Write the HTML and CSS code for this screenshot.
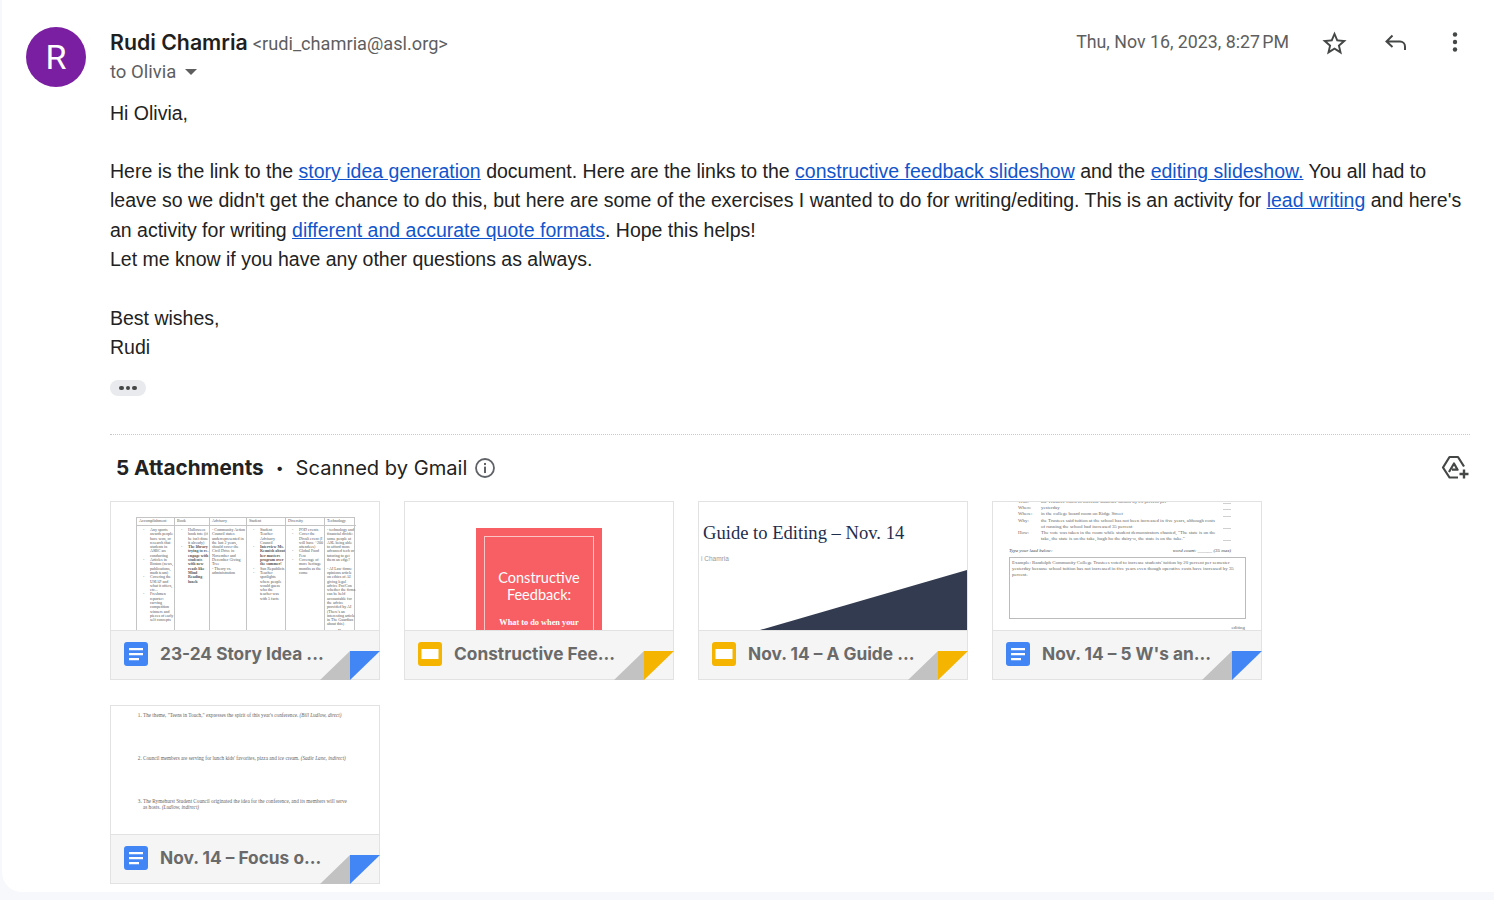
FILE: index.html
```html
<!DOCTYPE html>
<html lang="en">
<head>
<meta charset="utf-8">
<title>Email</title>
<link rel="stylesheet" href="styles.css">
</head>
<body>
<main class="panel">
  <div class="avatar">R</div>
  <div class="message">
    <header class="head">
      <div class="who">
        <div class="from"><span class="name">Rudi Chamria</span> <span class="addr">&lt;rudi_chamria@asl.org&gt;</span></div>
        <div class="to">to Olivia <span class="caret"></span></div>
      </div>
      <div class="meta">
        <span class="date">Thu, Nov 16, 2023, 8:27&#8239;PM</span>
        <svg class="icon-star" viewBox="0 0 24 24" width="29" height="29"><path fill="#444746" d="M22 9.24l-7.19-.62L12 2 9.19 8.63 2 9.24l5.46 4.73L5.82 21 12 17.27 18.18 21l-1.63-7.03L22 9.24zM12 15.4l-3.76 2.27 1-4.28-3.32-2.88 4.38-.38L12 6.1l1.71 4.04 4.38.38-3.32 2.88 1 4.28L12 15.4z"/></svg>
        <svg class="icon-reply" viewBox="0 0 24 24" width="24" height="24"><path fill="none" stroke="#444746" stroke-width="2" d="M9.5 5.5L3.5 11.5l6 5.5M3.5 11.5H17a5 5 0 0 1 5 5V20"/></svg>
        <svg class="icon-more" viewBox="0 0 24 24" width="24" height="24"><g fill="#444746"><circle cx="12" cy="4.5" r="2.2"/><circle cx="12" cy="12" r="2.2"/><circle cx="12" cy="19.5" r="2.2"/></g></svg>
      </div>
    </header>
    <div class="body">
      <p>Hi Olivia,</p>
      <p class="blank">&nbsp;</p>
      <p>Here is the link to the <a href="#">story idea generation</a> document. Here are the links to the <a href="#">constructive feedback slideshow</a> and the <a href="#">editing slideshow.</a> You all had to leave so we didn't get the chance to do this, but here are some of the exercises I wanted to do for writing/editing. This is an activity for <a href="#">lead writing</a> and here's an activity for writing <a href="#">different and accurate quote formats</a>. Hope this helps!</p>
      <p>Let me know if you have any other questions as always.</p>
      <p class="blank">&nbsp;</p>
      <p>Best wishes,</p>
      <p>Rudi</p>
    </div>
    <div class="more-pill"><i></i><i></i><i></i></div>
    <section class="attachments">
      <div class="att-head">
        <div class="att-title"><b>5 Attachments</b><span class="sep">•</span><span class="scan">Scanned by Gmail</span>
          <svg class="icon-info" viewBox="0 0 24 24" width="22" height="22"><circle cx="12" cy="12" r="9.8" fill="none" stroke="#5f6368" stroke-width="2"/><rect x="10.9" y="10.5" width="2.2" height="7" fill="#5f6368"/><rect x="10.9" y="6.5" width="2.2" height="2.3" fill="#5f6368"/></svg>
        </div>
        <svg class="icon-drive" viewBox="0 0 28 26" width="28" height="26"><path fill="none" stroke="#444746" stroke-width="2.2" stroke-linejoin="round" d="M17 22.5H8.5L2 12.5 8.5 2h8.5l6 9.5M8 17l5-8.5 3.6 6.2H11"/><path fill="none" stroke="#444746" stroke-width="2.4" d="M23 14.5v9M18.5 19h9"/></svg>
      </div>
      <div class="cards">
        <article class="card">
          <div class="thumb thumb-table">
            <div class="sheet">
              <div class="col c1"><h6>Accomplishment</h6><ul><li>Any sports awards people have won, or research that students in ASBC are conducting</li><li>Articles in Boston (news, publications, math team)</li><li>Covering the USIAP and what it offers, etc...</li><li>Freshmen reporter: carving competition winners and pieces of early self concepts</li></ul></div>
              <div class="col c2"><h6>Book</h6><ul><li>Halloween book tote (if he isn't done it already)</li><li><b>The library trying to re-engage with students with new reads like Mind Reading lunch</b></li></ul></div>
              <div class="col c3"><h6>Advisory</h6><p>- Community Action Council states underrepresented in the last 2 years, should cover the Civil Drive in November and December Giving Tree<br>- Theory vs. administration</p></div>
              <div class="col c4"><h6>Student</h6><ul><li>Student Teacher Advisory Council</li><li><b>Interview Ms. Kennish about her masters program over the summer!</b></li><li>Sun Republicis</li><li>Teacher spotlights where people would guess who the teacher was with 5 facts</li></ul></div>
              <div class="col c5"><h6>Diversity</h6><ul><li>POD events</li><li>Cover the Divali event (I will have ~200 attendees)</li><li>Global Food Fest</li><li>Coverage of more heritage months as the come</li></ul></div>
              <div class="col c6"><h6>Technology</h6><p>- technology and financial divide: some people at ASL being able to afford more advanced tech or tutoring to get them an edge?<br><br>- AI Law firms: opinions article on ethics of AI giving legal advice Pro/Con whether the firms can be held accountable for the advice provided by AI (There's an interesting article in The Guardian about this)</p><ul><li>New</li></ul></div>
            </div>
          </div>
          <footer class="foot"><svg class="ficon" viewBox="0 0 24 24" width="24" height="24"><rect width="24" height="24" rx="3" fill="#4285f4"/><path fill="#fff" d="M5 6h14v2.2H5zM5 11h14v2.2H5zM5 16h10v2.2H5z"/></svg><span class="ftitle">23-24 Story Idea ...</span><span class="fold fold-blue"></span></footer>
        </article>
        <article class="card">
          <div class="thumb thumb-red">
            <div class="red-slide"><div class="red-inner"><div class="red-title">Constructive<br>Feedback:</div><div class="red-sub">What to do when your<br>writing needs work</div></div></div>
          </div>
          <footer class="foot"><svg class="ficon" viewBox="0 0 24 24" width="24" height="24"><rect width="24" height="24" rx="3" fill="#f4b400"/><rect x="3.5" y="7" width="17" height="10" fill="#fff"/></svg><span class="ftitle">Constructive Fee...</span><span class="fold fold-yellow"></span></footer>
        </article>
        <article class="card">
          <div class="thumb thumb-guide">
            <div class="guide-title">Guide to Editing – Nov. 14</div>
            <div class="guide-by">i Chamria</div>
            <svg class="guide-wedge" viewBox="0 0 268 60" width="268" height="60" preserveAspectRatio="none"><polygon points="61,60 268,0 268,60" fill="#333b50"/></svg>
          </div>
          <footer class="foot"><svg class="ficon" viewBox="0 0 24 24" width="24" height="24"><rect width="24" height="24" rx="3" fill="#f4b400"/><rect x="3.5" y="7" width="17" height="10" fill="#fff"/></svg><span class="ftitle">Nov. 14 – A Guide ...</span><span class="fold fold-yellow"></span></footer>
        </article>
        <article class="card">
          <div class="thumb thumb-lead">
            <dl class="wlist">
              <dt>Who:</dt><dd>the Trustees voted to increase students' tuition by 20 percent per</dd><span class="blankline"></span>
              <dt>When:</dt><dd>yesterday</dd><span class="blankline"></span>
              <dt>Where:</dt><dd>in the college board room on Ridge Street</dd><span class="blankline"></span>
              <dt>Why:</dt><dd>the Trustees said tuition at the school has not been increased in five years, although costs of running the school had increased 35 percent</dd><span class="blankline"></span>
              <dt>How:</dt><dd>The vote was taken in the room while student demonstrators chanted, "The state is on the take, the state is on the take, hugh ho the dairy-o, the state is on the take."</dd><span class="blankline"></span>
            </dl>
            <div class="lead-row"><i>Type your lead below:</i><i>word count: ______ (35 max)</i></div>
            <div class="lead-box">Example: Randolph Community College Trustees voted to increase students' tuition by 20 percent per semester yesterday because school tuition has not increased in five years even though operative costs have increased by 35 percent.</div>
            <div class="lead-foot">editing</div>
          </div>
          <footer class="foot"><svg class="ficon" viewBox="0 0 24 24" width="24" height="24"><rect width="24" height="24" rx="3" fill="#4285f4"/><path fill="#fff" d="M5 6h14v2.2H5zM5 11h14v2.2H5zM5 16h10v2.2H5z"/></svg><span class="ftitle">Nov. 14 – 5 W's an...</span><span class="fold fold-blue"></span></footer>
        </article>
        <article class="card">
          <div class="thumb thumb-focus">
            <ol class="quotes">
              <li>The theme, "Teens in Touch," expresses the spirit of this year's conference. <i>(Bill Ludlow, direct)</i></li>
              <li>Council members are serving for lunch kids' favorites, pizza and ice cream. <i>(Sadie Lane, indirect)</i></li>
              <li>The Rymehurst Student Council originated the idea for the conference, and its members will serve as hosts. <i>(Ludlow, indirect)</i></li>
            </ol>
          </div>
          <footer class="foot"><svg class="ficon" viewBox="0 0 24 24" width="24" height="24"><rect width="24" height="24" rx="3" fill="#4285f4"/><path fill="#fff" d="M5 6h14v2.2H5zM5 11h14v2.2H5zM5 16h10v2.2H5z"/></svg><span class="ftitle">Nov. 14 – Focus o...</span><span class="fold fold-blue"></span></footer>
        </article>
      </div>
    </section>
  </div>
</main>
</body>
</html>
```

FILE: styles.css
```css
* { box-sizing: border-box; }
html, body { margin: 0; height: 900px; overflow: hidden; }
body { background: #f6f8fc; font-family: "Liberation Sans", Arial, sans-serif; color: #222; }
.panel { margin-left: 2px; height: 892px; background: #fff; border-bottom-left-radius: 20px; display: flex; padding: 27px 24px 0 24px; }
.avatar { flex: none; width: 60px; height: 60px; border-radius: 50%; background: #7b1fa2; color: #fff; font: 400 34px/60px Roboto, sans-serif; text-align: center; }
.message { flex: 1; margin-left: 24px; min-width: 0; }
.head { display: flex; justify-content: space-between; height: 60px; }
.from { height: 30px; display: flex; align-items: baseline; gap: 5px; white-space: nowrap; }
.name { font: 600 21.3px/30px Inter, sans-serif; color: #1f1f1f; }
.addr { font: 400 18.2px/30px Roboto, sans-serif; color: #5e5e5e; }
.to { font: 400 18.5px/30px Roboto, sans-serif; color: #5e5e5e; }
.caret { display: inline-block; width: 0; height: 0; margin-left: 4px; vertical-align: 3px; border: 6px solid transparent; border-top-color: #5e5e5e; border-bottom: 0; }
.meta { display: flex; align-items: flex-start; }
.date { font: 400 17.8px/30px Roboto, sans-serif; color: #5e5e5e; margin-right: 31px; }
.icon-star { margin: 2px 0 0 0; }
.icon-reply { margin: 3px 0 0 34px; }
.icon-more { margin: 3px 3px 0 36px; }
.body { margin-top: 11.5px; font-size: 19.5px; line-height: 29.33px; color: #222; }
.body p { margin: 0; }
.body a { color: #1155cc; }
.more-pill { margin-top: 17.5px; width: 36px; height: 16px; border-radius: 8px; background: #e8eaed; display: flex; align-items: center; justify-content: center; gap: 2px; }
.more-pill i { width: 4.6px; height: 4.6px; border-radius: 50%; background: #444746; }
.attachments { margin-top: 38px; border-top: 1px dotted #c8c8c8; }
.att-head { display: flex; justify-content: space-between; align-items: center; height: 66px; padding-left: 6px; }
.att-title { display: flex; align-items: center; font: 400 20.1px/30px Inter, sans-serif; color: #222; }
.att-title b { font-weight: 700; font-size: 20.7px; }
.sep { margin: 0 12px; font-size: 14px; }
.icon-info { margin-left: 7px; }
.icon-drive { margin-right: 1px; }
.cards { display: flex; flex-wrap: wrap; gap: 25px 24px; }
.card { position: relative; width: 270px; height: 179px; border: 1px solid #e2e2e2; background: #fff; display: flex; flex-direction: column; }
.thumb { height: 128px; overflow: hidden; position: relative; flex: none; }
.foot { position: relative; flex: 1; background: #f5f5f5; border-top: 1px solid #e2e2e2; display: flex; align-items: center; padding: 0 0 1px 13px; }
.ficon { flex: none; }
.ftitle { margin-left: 12px; font: 700 17.3px/26px Inter, sans-serif; color: #6a6a6a; white-space: nowrap; }
.fold { position: absolute; right: -1px; bottom: -1px; width: 60px; height: 29px; }
.fold::before { content: ""; position: absolute; left: 0; top: 0; width: 30px; height: 29px; background: #c2c2c2; clip-path: polygon(100% 0, 100% 100%, 0 100%); }
.fold::after { content: ""; position: absolute; right: 0; top: 0; width: 30px; height: 29px; clip-path: polygon(0 0, 100% 0, 0 100%); }
.fold-blue::after { background: #4285f4; }
.fold-yellow::after { background: #f4b400; }

/* table thumbnail */
.thumb-table { padding: 15px 0 0 25px; }
.sheet { display: flex; width: 219px; height: 140px; border: 1px solid #c4c4c4; font: 4px/4.3px "Liberation Serif", serif; color: #555; }
.col { border-left: 1px solid #c4c4c4; height: 100%; flex: none; }
.col:first-child { border-left: 0; }
.c1 { width: 37px; } .c2 { width: 35px; } .c3 { width: 37px; } .c4 { width: 39px; } .c5 { width: 39px; } .c6 { width: 32px; }
.col h6 { margin: 0; height: 8px; padding: 1.5px 0 0 2px; font: 4px/4.3px "Liberation Serif", serif; color: #555; border-bottom: 1px solid #c4c4c4; }
.col ul { margin: 2px 0 0; padding: 0 0 0 13px; list-style: none; }
.col ul li { position: relative; }
.col ul li::before { content: "-"; position: absolute; left: -7px; }
.col p { margin: 2px 0 0 2px; }

/* red slide */
.thumb-red { display: flex; justify-content: center; padding-top: 26px; }
.red-slide { width: 126px; height: 130px; background: #f75f64; padding: 8px; flex: none; }
.red-inner { height: 130px; border: 1px solid #fbc4c5; text-align: center; color: #fff; padding-top: 32px; }
.red-title { font: 400 14.5px/17px Lato, sans-serif; }
.red-sub { margin-top: 14px; font: 700 8.3px/11px "Liberation Serif", serif; }

/* guide slide */
.thumb-guide { padding: 19px 0 0 4px; }
.guide-title { font: 400 18.6px/24px "Liberation Serif", serif; color: #1f2d4d; white-space: nowrap; }
.guide-by { margin: 9px 0 0 -2px; font: 400 6.5px/10px "Liberation Sans", sans-serif; color: #999; }
.guide-wedge { position: absolute; right: 0; bottom: 0; display: block; }

/* lead */
.thumb-lead { padding: 0 16px; font: 4.9px/6.2px "Liberation Serif", serif; color: #666; }
.wlist { display: grid; grid-template-columns: 23px 178px 12px; margin: -3px 0 0 9px; }
.wlist dt, .wlist dd { margin: 0; }
.blankline { align-self: end; height: 1px; width: 8px; margin: 0 0 1px 4px; background: #d0d0d0; }
.lead-row { display: flex; justify-content: space-between; width: 222px; margin-top: 6px; color: #444; }
.lead-box { width: 237px; height: 62px; margin-top: 2px; border: 1px solid #bbb; padding: 2px 1px 0 2px; }
.lead-foot { margin-top: 6px; text-align: right; width: 240px; padding-right: 4px; }

/* focus */
.thumb-focus { padding: 6px 28px 0 0; font: 5.2px/6px "Liberation Serif", serif; color: #666; }
.quotes { margin: 0; padding: 0 0 0 32px; }
.quotes li { margin: 0 0 37px; }
```
